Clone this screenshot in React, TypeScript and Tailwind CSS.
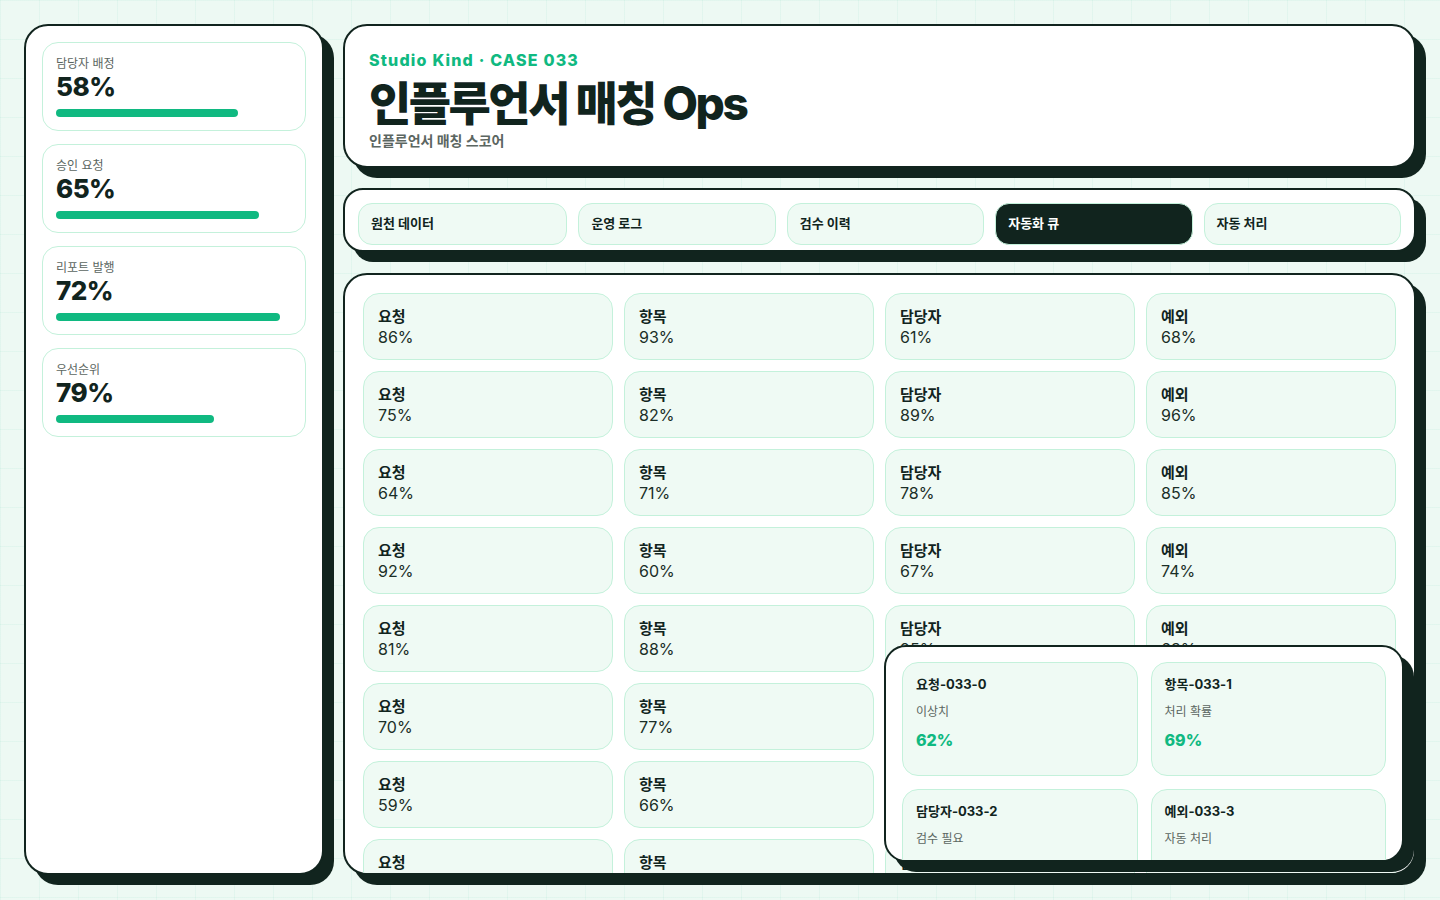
import React from "react";

const sideStats = [
  { label: "담당자 배정", value: "58%", bar: 182 },
  { label: "승인 요청", value: "65%", bar: 203 },
  { label: "리포트 발행", value: "72%", bar: 224 },
  { label: "우선순위", value: "79%", bar: 158 },
];

const tabs = ["원천 데이터", "운영 로그", "검수 이력", "자동화 큐", "자동 처리"];

const cols = [
  { label: "요청", start: 86 },
  { label: "항목", start: 93 },
  { label: "담당자", start: 61 },
  { label: "예외", start: 68 },
];

function seq(start: number, n: number) {
  const out: number[] = [];
  let v = start;
  for (let i = 0; i < n; i++) {
    out.push(v);
    v -= 11;
    if (v < 58) v += 39;
  }
  return out;
}

const rows = 8;
const cells: { label: string; value: number }[] = [];
const colVals = cols.map((c) => seq(c.start, rows));
for (let r = 0; r < rows; r++) {
  for (let c = 0; c < 4; c++) {
    cells.push({ label: cols[c].label, value: colVals[c][r] });
  }
}

const overlayCards = [
  { title: "요청-033-0", sub: "이상치", value: "62%" },
  { title: "항목-033-1", sub: "처리 확률", value: "69%" },
  { title: "담당자-033-2", sub: "검수 필요", value: "76%" },
  { title: "예외-033-3", sub: "자동 처리", value: "83%" },
];

export default function App() {
  return (
    <div
      className="relative h-[900px] w-[1440px] overflow-hidden bg-[#edf9f3] bg-[linear-gradient(to_right,rgba(16,185,129,0.05)_1px,transparent_1px),linear-gradient(to_bottom,rgba(16,185,129,0.05)_1px,transparent_1px)] bg-[size:39px_39px] pl-6 pr-6 pt-6 pb-[25px] text-[#11241e]"
      style={{ fontFamily: 'Inter, "Noto Sans CJK KR", "Noto Sans", sans-serif' }}
    >
      <div className="grid h-full grid-cols-[300px_1fr] gap-[19px]">
        {/* Sidebar */}
        <aside className="flex flex-col gap-[13px] rounded-[24px] border-2 border-[#11241e] bg-white p-4 shadow-[10px_10px_0_#11241e]">
          {sideStats.map((s) => (
            <div
              key={s.label}
              className="rounded-[16px] border border-[#c4f1db] bg-white px-[13px] pt-[13px] pb-[13px]"
            >
              <div className="text-[12px] leading-4 text-[#5b6661]">{s.label}</div>
              <div className="text-[26px] font-extrabold leading-[30px] tracking-[-0.02em]">
                {s.value}
              </div>
              <div
                className="mt-[7px] h-2 rounded-full bg-[#10b981]"
                style={{ width: s.bar }}
              />
            </div>
          ))}
        </aside>

        {/* Main column */}
        <main className="flex min-h-0 flex-col">
          {/* Header */}
          <header className="rounded-[24px] border-2 border-[#11241e] bg-white px-6 pt-6 pb-[15px] shadow-[10px_10px_0_#11241e]">
            <div className="text-base font-extrabold leading-5 tracking-[0.075em] text-[#10b981]">
              Studio Kind · CASE 033
            </div>
            <h1 className="mt-[9px] text-[46px] font-extrabold leading-[48px] tracking-[-0.055em]">
              인플루언서 매칭 Ops
            </h1>
            <div className="mt-1 text-[14px] font-bold leading-5 text-[#5b6661]">
              인플루언서 매칭 스코어
            </div>
          </header>

          {/* Tabs */}
          <nav className="mt-5 flex gap-[11px] rounded-[20px] border-2 border-[#11241e] bg-white px-[13px] pt-[13px] pb-[5px] shadow-[10px_10px_0_#11241e]">
            {tabs.map((t) => {
              const active = t === "자동화 큐";
              return (
                <div
                  key={t}
                  className={
                    active
                      ? "flex h-[42px] flex-auto items-center rounded-[14px] border border-[#c4f1db] bg-[#11241e] px-3 text-[13px] font-bold text-white"
                      : "flex h-[42px] flex-auto items-center rounded-[14px] border border-[#c4f1db] bg-[#effaf4] px-3 text-[13px] font-bold text-[#11241e]"
                  }
                >
                  {t}
                </div>
              );
            })}
          </nav>

          {/* Grid panel */}
          <section className="mt-[21px] min-h-0 flex-1 overflow-hidden rounded-[24px] border-2 border-[#11241e] bg-white p-[18px] shadow-[10px_10px_0_#11241e]">
            <div className="grid grid-cols-4 gap-[11px]">
              {cells.map((c, i) => (
                <div
                  key={i}
                  className="h-[67px] rounded-[16px] border border-[#c4f1db] bg-[#effaf4] px-[14px] pt-3"
                >
                  <div className="text-[15px] font-bold leading-[21px]">{c.label}</div>
                  <div className="text-[16px] leading-5 text-[#1a2e27]">{c.value}%</div>
                </div>
              ))}
            </div>
          </section>
        </main>
      </div>

      {/* Floating overlay */}
      <div className="absolute right-[36px] bottom-[38px] h-[217px] w-[520px] overflow-hidden rounded-[22px] border-2 border-[#11241e] bg-white px-4 pt-[15px] shadow-[10px_10px_0_#11241e]">
        <div className="grid grid-cols-2 gap-[13px]">
          {overlayCards.map((o) => (
            <div
              key={o.title}
              className="h-[114px] rounded-[16px] border border-[#c4f1db] bg-[#effaf4] px-[13px] pt-3"
            >
              <div className="text-[13px] font-bold leading-[18px]">{o.title}</div>
              <div className="mt-[11px] text-[12px] leading-4 text-[#5b6661]">{o.sub}</div>
              <div className="mt-[10px] text-[16px] font-extrabold leading-5 text-[#10b981]">
                {o.value}
              </div>
            </div>
          ))}
        </div>
      </div>
    </div>
  );
}
